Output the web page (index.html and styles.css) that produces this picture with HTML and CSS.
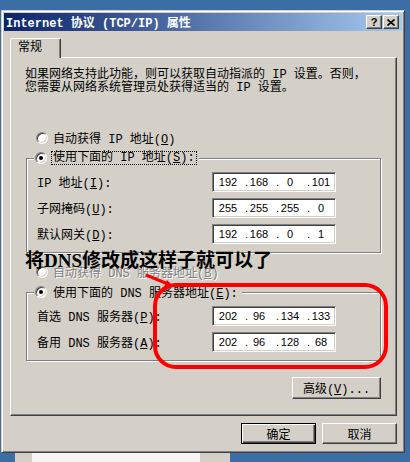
FILE: index.html
```html
<!DOCTYPE html>
<html lang="zh-CN">
<head>
<meta charset="UTF-8">
<title>Internet 协议 (TCP/IP) 属性</title>
<link rel="stylesheet" href="styles.css">
</head>
<body>
<div class="window">
    <div class="titlebar">
        <span class="title">Internet 协议 (TCP/IP) 属性</span>
        <span class="tbtn help">?</span>
        <span class="tbtn close">
            <svg width="8" height="7" viewBox="0 0 8 7"><path d="M0.5 0.5L7.5 6.5M7.5 0.5L0.5 6.5" stroke="#000" stroke-width="1.6"/></svg>
        </span>
    </div>
    <div class="tabs"><div class="tab">常规</div></div>
    <div class="panel">
        <p class="desc">如果网络支持此功能，则可以获取自动指派的 IP 设置。否则，<br>您需要从网络系统管理员处获得适当的 IP 设置。</p>

        <div class="opt auto-ip"><span class="radio"></span><span>自动获得 IP 地址(<u>O</u>)</span></div>

        <fieldset class="group">
            <legend><span class="radio on"></span><span class="focus">使用下面的 IP 地址(<u>S</u>):</span></legend>
            <div class="field-row">
                <span class="lbl">IP 地址(<u>I</u>):</span>
                <div class="ipbox"><span class="oct">192</span><span class="dot">.</span><span class="oct">168</span><span class="dot">.</span><span class="oct">0</span><span class="dot">.</span><span class="oct">101</span></div>
            </div>
            <div class="field-row">
                <span class="lbl">子网掩码(<u>U</u>):</span>
                <div class="ipbox"><span class="oct">255</span><span class="dot">.</span><span class="oct">255</span><span class="dot">.</span><span class="oct">255</span><span class="dot">.</span><span class="oct">0</span></div>
            </div>
            <div class="field-row">
                <span class="lbl">默认网关(<u>D</u>):</span>
                <div class="ipbox"><span class="oct">192</span><span class="dot">.</span><span class="oct">168</span><span class="dot">.</span><span class="oct">0</span><span class="dot">.</span><span class="oct">1</span></div>
            </div>
        </fieldset>

        <div class="opt auto-dns disabled"><span class="radio"></span><span>自动获得 DNS 服务器地址(<u>B</u>)</span></div>

        <fieldset class="group dns">
            <legend><span class="radio on"></span><span class="plain">使用下面的 DNS 服务器地址(<u>E</u>):</span></legend>
            <div class="field-row">
                <span class="lbl">首选 DNS 服务器(<u>P</u>):</span>
                <div class="ipbox"><span class="oct">202</span><span class="dot">.</span><span class="oct">96</span><span class="dot">.</span><span class="oct">134</span><span class="dot">.</span><span class="oct">133</span></div>
            </div>
            <div class="field-row">
                <span class="lbl">备用 DNS 服务器(<u>A</u>):</span>
                <div class="ipbox"><span class="oct">202</span><span class="dot">.</span><span class="oct">96</span><span class="dot">.</span><span class="oct">128</span><span class="dot">.</span><span class="oct">68</span></div>
            </div>
        </fieldset>

        <div class="adv-row"><button class="btn adv">高级(<u>V</u>)...</button></div>

        <div class="note">将DNS修改成这样子就可以了</div>
    </div>
    <div class="footer">
        <button class="btn default">确定</button>
        <button class="btn">取消</button>
    </div>
</div>

<!-- bit of the window behind, showing under the dialog -->
<div class="behind"><span class="behind-gray"></span><span class="behind-white"></span><span class="behind-gray"></span></div>

<!-- red marker drawn over the screenshot -->
<svg class="marker" width="410" height="462" viewBox="0 0 410 462">
    <rect x="155" y="285" width="231" height="82" rx="21" fill="none" stroke="#f00" stroke-width="4"/>
    <path d="M146 275L168 284" stroke="#f00" stroke-width="3"/>
    <path d="M173 286L164 287L167 280Z" fill="#f00"/>
</svg>
</body>
</html>
```
FILE: styles.css
```css
body {
    margin: 0;
    background-color: #3a6ea5;
    font: 12px "Liberation Mono", "Noto Sans CJK SC", sans-serif;
    color: #000;
}

.window {
    width: 404px;
    height: 443px;
    margin: 10px 0 0 1px;
    box-sizing: border-box;
    background-color: #d4d0c8;
    border: 1px solid;
    border-color: #d4d0c8 #404040 #404040 #d4d0c8;
    box-shadow: inset 1px 1px #fff, inset -1px -1px #808080;
    padding: 2px;
}

.titlebar {
    height: 18px;
    display: flex;
    align-items: center;
    padding: 0 3px 0 2px;
    background: linear-gradient(90deg, #0a246a, #a6caf0);
    color: #fff;
    font-weight: bold;
}
.title {
    flex: 1;
    white-space: nowrap;
}
.tbtn {
    width: 16px;
    height: 14px;
    box-sizing: border-box;
    display: flex;
    align-items: center;
    justify-content: center;
    background-color: #d4d0c8;
    border: 1px solid;
    border-color: #fff #404040 #404040 #fff;
    box-shadow: inset -1px -1px #808080;
    color: #000;
}
.help {
    margin-right: 1px;
    font: bold 11px "Liberation Sans", sans-serif;
}

.tabs {
    margin: 7px 0 0 6px;
    height: 19px;
}
.tab {
    position: relative;
    z-index: 1;
    width: 51px;
    height: 20px;
    box-sizing: border-box;
    padding: 3px 0 0 7px;
    background-color: #d4d0c8;
    border: 1px solid;
    border-bottom: none;
    border-color: #fff #404040 #d4d0c8 #fff;
    border-radius: 2px 2px 0 0;
    box-shadow: inset -1px 0 #808080;
    line-height: 13px;
}

.panel {
    position: relative;
    margin-left: 6px;
    width: 387px;
    height: 359px;
    box-sizing: border-box;
    padding: 10px 0 0 14px;
    border: 1px solid;
    border-color: #fff #404040 #404040 #fff;
    box-shadow: inset -1px -1px #808080;
}

.desc {
    margin: 1px 0 0;
    line-height: 13px;
    white-space: nowrap;
}

.opt {
    display: flex;
    align-items: center;
    gap: 5px;
    height: 14px;
    margin-left: 11px;
    white-space: nowrap;
}
.auto-ip {
    margin-top: 36px;
}
.auto-dns {
    margin-top: 12px;
}
.disabled {
    color: #808080;
    text-shadow: 1px 1px #fff;
}

.radio {
    position: relative;
    flex: none;
    width: 12px;
    height: 12px;
    box-sizing: border-box;
    border-radius: 50%;
    background-color: #fff;
    border: 1px solid;
    border-color: #808080 #fff #fff #808080;
    box-shadow: inset 1px 1px #404040, inset -1px -1px #d4d0c8;
}
.radio.on::after {
    content: "";
    position: absolute;
    left: 3px;
    top: 3px;
    width: 4px;
    height: 4px;
    border-radius: 50%;
    background-color: #000;
}

.group {
    width: 355px;
    min-inline-size: 0;
    box-sizing: border-box;
    margin: 6px 0 0 1px;
    padding: 7px 0 8px 10px;
    border: 1px solid #808080;
    box-shadow: inset 1px 1px #fff, 1px 1px #fff;
}
.group legend {
    display: flex;
    align-items: center;
    gap: 4px;
    height: 14px;
    margin-left: -3px;
    padding: 0 2px 0 1px;
    background-color: #d4d0c8;
    white-space: nowrap;
}
.focus {
    border: 1px dotted #000;
    padding: 0 1px;
    line-height: 12px;
}
.plain {
    padding: 0 2px;
}

.field-row {
    display: flex;
    align-items: center;
    height: 20px;
}
.field-row + .field-row {
    margin-top: 6px;
}
.lbl {
    width: 175px;
    white-space: nowrap;
}
.ipbox {
    display: flex;
    align-items: center;
    width: 124px;
    height: 20px;
    box-sizing: border-box;
    padding-left: 5px;
    background-color: #fff;
    border: 1px solid;
    border-color: #808080 #fff #fff #808080;
    box-shadow: inset 1px 1px #404040, inset -1px -1px #d4d0c8;
    font: 11px "Liberation Sans", sans-serif;
}
.oct {
    width: 20px;
    text-align: center;
}
.dot {
    width: 11px;
    box-sizing: border-box;
    padding-right: 1px;
    text-align: right;
}

.btn {
    font: inherit;
    color: #000;
    padding: 0;
    background-color: #d4d0c8;
    border: 1px solid;
    border-color: #fff #404040 #404040 #fff;
    box-shadow: inset -1px -1px #808080;
}
.btn.default {
    border-color: #000;
    box-shadow: inset 1px 1px #fff, inset -1px -1px #404040, inset -2px -2px #808080;
}
.adv-row {
    margin: 16px 0 0 267px;
}
.adv {
    width: 89px;
    height: 22px;
}

.footer {
    display: flex;
    justify-content: flex-end;
    gap: 6px;
    margin-top: 7px;
    padding-right: 5px;
}
.footer .btn {
    width: 75px;
    height: 21px;
}

.note {
    position: absolute;
    left: 14px;
    top: 193px;
    font: bold 19px/20px "Liberation Serif", "Noto Sans CJK SC", serif;
    white-space: nowrap;
}

.behind {
    display: flex;
    margin: 0 0 0 15px;
    width: 215px;
    height: 9px;
}
.behind-gray {
    width: 17px;
    background-color: #d4d0c8;
}
.behind-gray:last-child {
    width: 30px;
}
.behind-white {
    flex: 1;
    background-color: #f4f4f4;
}

.marker {
    position: absolute;
    left: 0;
    top: 0;
    pointer-events: none;
}
```
